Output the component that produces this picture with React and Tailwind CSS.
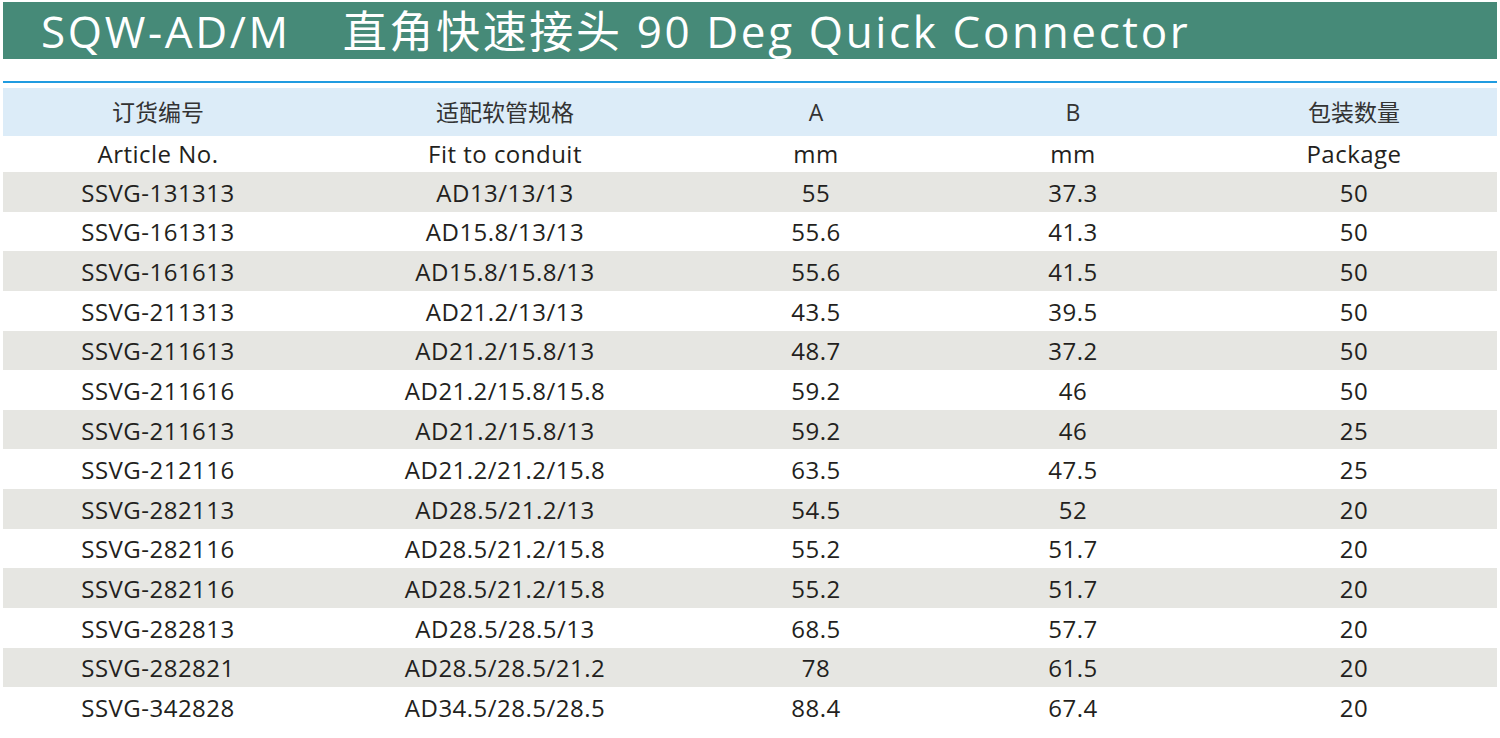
const rows = [
  ["SSVG-131313", "AD13/13/13", "55", "37.3", "50"],
  ["SSVG-161313", "AD15.8/13/13", "55.6", "41.3", "50"],
  ["SSVG-161613", "AD15.8/15.8/13", "55.6", "41.5", "50"],
  ["SSVG-211313", "AD21.2/13/13", "43.5", "39.5", "50"],
  ["SSVG-211613", "AD21.2/15.8/13", "48.7", "37.2", "50"],
  ["SSVG-211616", "AD21.2/15.8/15.8", "59.2", "46", "50"],
  ["SSVG-211613", "AD21.2/15.8/13", "59.2", "46", "25"],
  ["SSVG-212116", "AD21.2/21.2/15.8", "63.5", "47.5", "25"],
  ["SSVG-282113", "AD28.5/21.2/13", "54.5", "52", "20"],
  ["SSVG-282116", "AD28.5/21.2/15.8", "55.2", "51.7", "20"],
  ["SSVG-282116", "AD28.5/21.2/15.8", "55.2", "51.7", "20"],
  ["SSVG-282813", "AD28.5/28.5/13", "68.5", "57.7", "20"],
  ["SSVG-282821", "AD28.5/28.5/21.2", "78", "61.5", "20"],
  ["SSVG-342828", "AD34.5/28.5/28.5", "88.4", "67.4", "20"],
];

const cols = "grid grid-cols-[310px_384px_238px_276px_1fr]";

export default function App() {
  return (
    <div className="w-[1500px] h-[738px] bg-white text-[#231f20] font-['Open_Sans','Noto_Sans_CJK_SC',sans-serif] overflow-hidden">
      {/* title band */}
      <div className="mx-[3px] mt-[2px] h-[57px] bg-[#468a78] flex items-center pl-[38px] text-white text-[44px] leading-none tracking-[0.06em]">
        <span>SQW-AD/M</span>
        <span className="ml-[52px]">直角快速接头 90 Deg Quick Connector</span>
      </div>

      <div className="mx-[3px] mt-[22px] h-[2px] bg-[#1f9be0]" />

      <div className="mx-[3px] mt-[5px] tracking-[0.02em] text-[24px]">
        <div className={`${cols} h-[48px] items-center text-center bg-[#dcecf8] text-[23px] tracking-normal text-[#333]`}>
          <div>订货编号</div>
          <div>适配软管规格</div>
          <div>A</div>
          <div>B</div>
          <div>包装数量</div>
        </div>
        <div className={`${cols} h-[36px] items-center text-center`}>
          <div>Article No.</div>
          <div>Fit to conduit</div>
          <div>mm</div>
          <div>mm</div>
          <div>Package</div>
        </div>
        {rows.map((r, i) => (
          <div
            key={i}
            className={`${cols} h-[39.64px] items-center text-center ${
              i % 2 === 0 ? "bg-[#e6e6e2]" : "bg-white"
            }`}
          >
            {r.map((c, j) => (
              <div key={j} className="pt-[2px]">{c}</div>
            ))}
          </div>
        ))}
      </div>
    </div>
  );
}
